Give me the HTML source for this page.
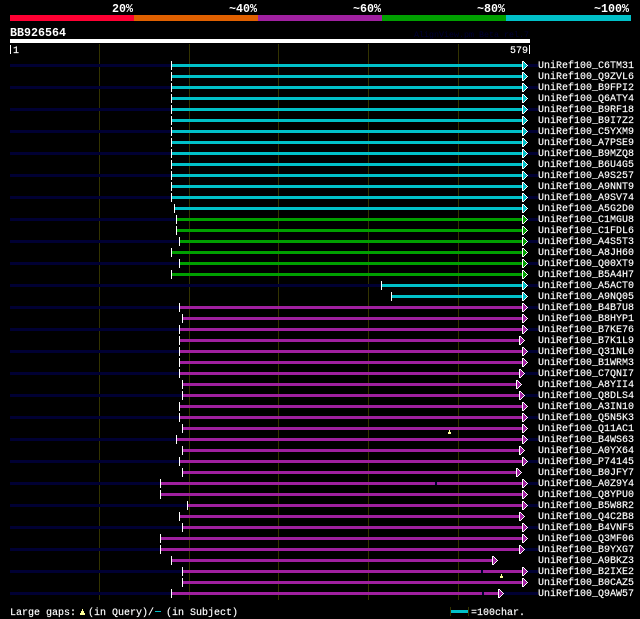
<!DOCTYPE html>
<html><head><meta charset="utf-8">
<style>
html,body{margin:0;padding:0;background:#000;width:640px;height:619px;overflow:hidden}
svg{display:block}
rect{shape-rendering:crispEdges}
text{fill:#fff;font-family:"Liberation Mono",monospace;font-size:10px;stroke:#fff;stroke-width:.15px}
.h{font-size:11.67px;font-weight:bold;stroke:none}
.c{fill:#00c0c8}.g{fill:#00a000}.p{fill:#a020a0}
rect.n{fill:#000033;height:3px;y:-1px}
rect.b{height:3px;y:-1px}
rect.t{fill:#fff;width:1px;height:9px;y:-4px}
rect.y{fill:#ffff99}
</style></head><body>
<svg xmlns="http://www.w3.org/2000/svg" width="640" height="619" viewBox="0 0 640 619">
<defs><g id="a">
<rect x="1" y="-4" width="1" height="9" fill="#fff"/><rect x="2" y="-3" width="1" height="7" fill="#fff"/><rect x="3" y="-2" width="1" height="5" fill="#fff"/><rect x="4" y="-1" width="1" height="3" fill="#fff"/><rect x="5" y="0" width="1" height="1" fill="#fff"/>
<rect x="1" y="-3" width="1" height="7"/><rect x="2" y="-2" width="1" height="5"/><rect x="3" y="-1" width="1" height="3"/><rect x="4" y="0" width="1" height="1"/>
<rect class="t" x="0"/>
</g></defs>
<rect width="640" height="619" fill="#000"/>
<text class="h" x="133" y="12" text-anchor="end">20%</text>
<text class="h" x="257" y="12" text-anchor="end">~40%</text>
<text class="h" x="381" y="12" text-anchor="end">~60%</text>
<text class="h" x="505" y="12" text-anchor="end">~80%</text>
<text class="h" x="629" y="12" text-anchor="end">~100%</text>
<rect x="10" y="15" width="124" height="6" fill="#ff0033"/>
<rect x="134" y="15" width="124" height="6" fill="#e06000"/>
<rect x="258" y="15" width="124" height="6" fill="#a020a0"/>
<rect x="382" y="15" width="124" height="6" fill="#00a000"/>
<rect x="506" y="15" width="125" height="6" fill="#00c0c8"/>
<text class="h" x="10" y="36">BB926564</text>
<text x="414" y="37" style="font-size:8.33px;fill:#000033;stroke:none">AlignView.pm Beta rel.7</text>
<rect x="10" y="39" width="520" height="4" fill="#fff"/>
<rect x="10" y="45" width="1" height="9" fill="#fff"/>
<text x="13" y="53">1</text>
<text x="528" y="53" text-anchor="end">579</text>
<rect x="529" y="45" width="1" height="9" fill="#fff"/>
<g fill="#333300">
<rect x="99" y="44" width="1" height="556"/><rect x="189" y="44" width="1" height="556"/><rect x="278" y="44" width="1" height="556"/><rect x="368" y="44" width="1" height="556"/><rect x="458" y="44" width="1" height="556"/>
</g>
<g transform="translate(0,65)" class="c"><rect class="n" x="10" width="161"/><rect class="n" x="522" width="16"/><rect class="b" x="171" width="351"/><rect class="t" x="171"/><use href="#a" x="522"/><text x="538" y="3">UniRef100_C6TM31</text></g>
<g transform="translate(0,76)" class="c"><rect class="b" x="171" width="351"/><rect class="t" x="171"/><use href="#a" x="522"/><text x="538" y="3">UniRef100_Q9ZVL6</text></g>
<g transform="translate(0,87)" class="c"><rect class="n" x="10" width="161"/><rect class="n" x="522" width="16"/><rect class="b" x="171" width="351"/><rect class="t" x="171"/><use href="#a" x="522"/><text x="538" y="3">UniRef100_B9FPI2</text></g>
<g transform="translate(0,98)" class="c"><rect class="b" x="171" width="351"/><rect class="t" x="171"/><use href="#a" x="522"/><text x="538" y="3">UniRef100_Q6ATY4</text></g>
<g transform="translate(0,109)" class="c"><rect class="n" x="10" width="161"/><rect class="n" x="522" width="16"/><rect class="b" x="171" width="351"/><rect class="t" x="171"/><use href="#a" x="522"/><text x="538" y="3">UniRef100_B9RF18</text></g>
<g transform="translate(0,120)" class="c"><rect class="b" x="171" width="351"/><rect class="t" x="171"/><use href="#a" x="522"/><text x="538" y="3">UniRef100_B9I7Z2</text></g>
<g transform="translate(0,131)" class="c"><rect class="n" x="10" width="161"/><rect class="n" x="522" width="16"/><rect class="b" x="171" width="351"/><rect class="t" x="171"/><use href="#a" x="522"/><text x="538" y="3">UniRef100_C5YXM9</text></g>
<g transform="translate(0,142)" class="c"><rect class="b" x="171" width="351"/><rect class="t" x="171"/><use href="#a" x="522"/><text x="538" y="3">UniRef100_A7PSE9</text></g>
<g transform="translate(0,153)" class="c"><rect class="n" x="10" width="161"/><rect class="n" x="522" width="16"/><rect class="b" x="171" width="351"/><rect class="t" x="171"/><use href="#a" x="522"/><text x="538" y="3">UniRef100_B9MZQ8</text></g>
<g transform="translate(0,164)" class="c"><rect class="b" x="171" width="351"/><rect class="t" x="171"/><use href="#a" x="522"/><text x="538" y="3">UniRef100_B6U4G5</text></g>
<g transform="translate(0,175)" class="c"><rect class="n" x="10" width="161"/><rect class="n" x="522" width="16"/><rect class="b" x="171" width="351"/><rect class="t" x="171"/><use href="#a" x="522"/><text x="538" y="3">UniRef100_A9S257</text></g>
<g transform="translate(0,186)" class="c"><rect class="b" x="171" width="351"/><rect class="t" x="171"/><use href="#a" x="522"/><text x="538" y="3">UniRef100_A9NNT9</text></g>
<g transform="translate(0,197)" class="c"><rect class="n" x="10" width="161"/><rect class="n" x="522" width="16"/><rect class="b" x="171" width="351"/><rect class="t" x="171"/><use href="#a" x="522"/><text x="538" y="3">UniRef100_A9SV74</text></g>
<g transform="translate(0,208)" class="c"><rect class="b" x="174" width="348"/><rect class="t" x="174"/><use href="#a" x="522"/><text x="538" y="3">UniRef100_A5G2D0</text></g>
<g transform="translate(0,219)" class="g"><rect class="n" x="10" width="166"/><rect class="n" x="522" width="16"/><rect class="b" x="176" width="346"/><rect class="t" x="176"/><use href="#a" x="522"/><text x="538" y="3">UniRef100_C1MGU8</text></g>
<g transform="translate(0,230)" class="g"><rect class="b" x="176" width="346"/><rect class="t" x="176"/><use href="#a" x="522"/><text x="538" y="3">UniRef100_C1FDL6</text></g>
<g transform="translate(0,241)" class="g"><rect class="n" x="10" width="169"/><rect class="n" x="522" width="16"/><rect class="b" x="179" width="343"/><rect class="t" x="179"/><use href="#a" x="522"/><text x="538" y="3">UniRef100_A4S5T3</text></g>
<g transform="translate(0,252)" class="g"><rect class="b" x="171" width="351"/><rect class="t" x="171"/><use href="#a" x="522"/><text x="538" y="3">UniRef100_A8JH60</text></g>
<g transform="translate(0,263)" class="g"><rect class="n" x="10" width="169"/><rect class="n" x="522" width="16"/><rect class="b" x="179" width="343"/><rect class="t" x="179"/><use href="#a" x="522"/><text x="538" y="3">UniRef100_Q00XT9</text></g>
<g transform="translate(0,274)" class="g"><rect class="b" x="171" width="351"/><rect class="t" x="171"/><use href="#a" x="522"/><text x="538" y="3">UniRef100_B5A4H7</text></g>
<g transform="translate(0,285)" class="c"><rect class="n" x="10" width="371"/><rect class="n" x="522" width="16"/><rect class="b" x="381" width="141"/><rect class="t" x="381"/><use href="#a" x="522"/><text x="538" y="3">UniRef100_A5ACT0</text></g>
<g transform="translate(0,296)" class="c"><rect class="b" x="391" width="131"/><rect class="t" x="391"/><use href="#a" x="522"/><text x="538" y="3">UniRef100_A9NQ05</text></g>
<g transform="translate(0,307)" class="p"><rect class="n" x="10" width="169"/><rect class="n" x="522" width="16"/><rect class="b" x="179" width="343"/><rect class="t" x="179"/><use href="#a" x="522"/><text x="538" y="3">UniRef100_B4B7U8</text></g>
<g transform="translate(0,318)" class="p"><rect class="b" x="182" width="340"/><rect class="t" x="182"/><use href="#a" x="522"/><text x="538" y="3">UniRef100_B8HYP1</text></g>
<g transform="translate(0,329)" class="p"><rect class="n" x="10" width="169"/><rect class="n" x="522" width="16"/><rect class="b" x="179" width="343"/><rect class="t" x="179"/><use href="#a" x="522"/><text x="538" y="3">UniRef100_B7KE76</text></g>
<g transform="translate(0,340)" class="p"><rect class="b" x="179" width="340"/><rect class="t" x="179"/><use href="#a" x="519"/><text x="538" y="3">UniRef100_B7K1L9</text></g>
<g transform="translate(0,351)" class="p"><rect class="n" x="10" width="169"/><rect class="n" x="522" width="16"/><rect class="b" x="179" width="343"/><rect class="t" x="179"/><use href="#a" x="522"/><text x="538" y="3">UniRef100_Q31NL0</text></g>
<g transform="translate(0,362)" class="p"><rect class="b" x="179" width="343"/><rect class="t" x="179"/><use href="#a" x="522"/><text x="538" y="3">UniRef100_B1WRM3</text></g>
<g transform="translate(0,373)" class="p"><rect class="n" x="10" width="169"/><rect class="n" x="519" width="19"/><rect class="b" x="179" width="340"/><rect class="t" x="179"/><use href="#a" x="519"/><text x="538" y="3">UniRef100_C7QNI7</text></g>
<g transform="translate(0,384)" class="p"><rect class="b" x="182" width="334"/><rect class="t" x="182"/><use href="#a" x="516"/><text x="538" y="3">UniRef100_A8YII4</text></g>
<g transform="translate(0,395)" class="p"><rect class="n" x="10" width="172"/><rect class="n" x="519" width="19"/><rect class="b" x="182" width="337"/><rect class="t" x="182"/><use href="#a" x="519"/><text x="538" y="3">UniRef100_Q8DLS4</text></g>
<g transform="translate(0,406)" class="p"><rect class="b" x="179" width="343"/><rect class="t" x="179"/><use href="#a" x="522"/><text x="538" y="3">UniRef100_A3IN10</text></g>
<g transform="translate(0,417)" class="p"><rect class="n" x="10" width="169"/><rect class="n" x="522" width="16"/><rect class="b" x="179" width="343"/><rect class="t" x="179"/><use href="#a" x="522"/><text x="538" y="3">UniRef100_Q5N5K3</text></g>
<g transform="translate(0,428)" class="p"><rect class="b" x="182" width="340"/><rect class="t" x="182"/><use href="#a" x="522"/><text x="538" y="3">UniRef100_Q11AC1</text></g>
<g transform="translate(0,439)" class="p"><rect class="n" x="10" width="166"/><rect class="n" x="522" width="16"/><rect class="b" x="176" width="346"/><rect class="t" x="176"/><use href="#a" x="522"/><text x="538" y="3">UniRef100_B4WS63</text></g>
<g transform="translate(0,450)" class="p"><rect class="b" x="182" width="337"/><rect class="t" x="182"/><use href="#a" x="519"/><text x="538" y="3">UniRef100_A0YX64</text></g>
<g transform="translate(0,461)" class="p"><rect class="n" x="10" width="169"/><rect class="n" x="522" width="16"/><rect class="b" x="179" width="343"/><rect class="t" x="179"/><use href="#a" x="522"/><text x="538" y="3">UniRef100_P74145</text></g>
<g transform="translate(0,472)" class="p"><rect class="b" x="182" width="334"/><rect class="t" x="182"/><use href="#a" x="516"/><text x="538" y="3">UniRef100_B0JFY7</text></g>
<g transform="translate(0,483)" class="p"><rect class="n" x="10" width="150"/><rect class="n" x="522" width="16"/><rect class="b" x="160" width="362"/><rect class="n" x="435" width="2"/><rect class="t" x="160"/><use href="#a" x="522"/><text x="538" y="3">UniRef100_A0Z9Y4</text></g>
<g transform="translate(0,494)" class="p"><rect class="b" x="160" width="362"/><rect class="t" x="160"/><use href="#a" x="522"/><text x="538" y="3">UniRef100_Q8YPU0</text></g>
<g transform="translate(0,505)" class="p"><rect class="n" x="10" width="177"/><rect class="n" x="522" width="16"/><rect class="b" x="187" width="335"/><rect class="t" x="187"/><use href="#a" x="522"/><text x="538" y="3">UniRef100_B5W8R2</text></g>
<g transform="translate(0,516)" class="p"><rect class="b" x="179" width="340"/><rect class="t" x="179"/><use href="#a" x="519"/><text x="538" y="3">UniRef100_Q4C2B8</text></g>
<g transform="translate(0,527)" class="p"><rect class="n" x="10" width="172"/><rect class="n" x="522" width="16"/><rect class="b" x="182" width="340"/><rect class="t" x="182"/><use href="#a" x="522"/><text x="538" y="3">UniRef100_B4VNF5</text></g>
<g transform="translate(0,538)" class="p"><rect class="b" x="160" width="362"/><rect class="t" x="160"/><use href="#a" x="522"/><text x="538" y="3">UniRef100_Q3MF06</text></g>
<g transform="translate(0,549)" class="p"><rect class="n" x="10" width="150"/><rect class="n" x="519" width="19"/><rect class="b" x="160" width="359"/><rect class="t" x="160"/><use href="#a" x="519"/><text x="538" y="3">UniRef100_B9YXG7</text></g>
<g transform="translate(0,560)" class="p"><rect class="b" x="171" width="321"/><rect class="t" x="171"/><use href="#a" x="492"/><text x="538" y="3">UniRef100_A9BKZ3</text></g>
<g transform="translate(0,571)" class="p"><rect class="n" x="10" width="172"/><rect class="n" x="522" width="16"/><rect class="b" x="182" width="340"/><rect class="n" x="481" width="2"/><rect class="t" x="182"/><use href="#a" x="522"/><text x="538" y="3">UniRef100_B2IXE2</text></g>
<g transform="translate(0,582)" class="p"><rect class="b" x="182" width="340"/><rect class="t" x="182"/><use href="#a" x="522"/><text x="538" y="3">UniRef100_B0CAZ5</text></g>
<g transform="translate(0,593)" class="p"><rect class="n" x="10" width="161"/><rect class="n" x="498" width="40"/><rect class="b" x="171" width="327"/><rect class="n" x="482" width="2"/><rect class="t" x="171"/><use href="#a" x="498"/><text x="538" y="3">UniRef100_Q9AW57</text></g>
<rect class="y" x="449" y="430" width="1" height="2"/><rect class="y" x="448" y="432" width="3" height="2"/>
<rect class="y" x="501" y="574" width="1" height="2"/><rect class="y" x="500" y="576" width="3" height="2"/>
<text x="10" y="615">Large gaps:</text>
<rect class="y" x="82" y="609" width="1" height="2"/><rect class="y" x="81" y="611" width="3" height="2"/><rect class="y" x="80" y="613" width="5" height="2"/>
<text x="88" y="615">(in Query)/</text>
<rect x="155" y="611" width="6" height="1" fill="#00c0c8"/>
<text x="166" y="615">(in Subject)</text>
<rect x="450" y="607" width="1" height="9" fill="#333300"/>
<rect x="468" y="607" width="1" height="9" fill="#333300"/>
<rect x="451" y="610" width="17" height="3" fill="#00c0c8"/>
<text x="471" y="615">=100char.</text>
</svg>
</body></html>
